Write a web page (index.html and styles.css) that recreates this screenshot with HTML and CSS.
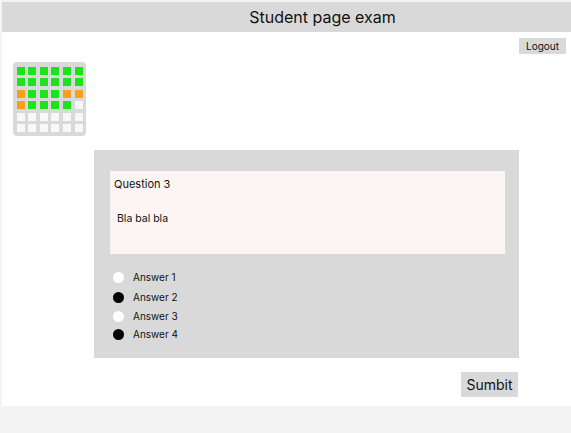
FILE: index.html
```html
<!DOCTYPE html>
<html>
<head>
<meta charset="utf-8">
<link rel="stylesheet" href="styles.css">
</head>
<body>
<div class="frame">
  <header class="header">Student page exam</header>
  <div class="toolbar"><button class="logout">Logout</button></div>
  <div class="grid">
    <span class="c g"></span><span class="c g"></span><span class="c g"></span><span class="c g"></span><span class="c g"></span><span class="c g"></span>
    <span class="c g"></span><span class="c g"></span><span class="c g"></span><span class="c g"></span><span class="c g"></span><span class="c g"></span>
    <span class="c o"></span><span class="c g"></span><span class="c g"></span><span class="c g"></span><span class="c o"></span><span class="c o"></span>
    <span class="c o"></span><span class="c g"></span><span class="c g"></span><span class="c g"></span><span class="c g"></span><span class="c w"></span>
    <span class="c w"></span><span class="c w"></span><span class="c w"></span><span class="c w"></span><span class="c w"></span><span class="c w"></span>
    <span class="c w"></span><span class="c w"></span><span class="c w"></span><span class="c w"></span><span class="c w"></span><span class="c w"></span>
  </div>
  <section class="card">
    <div class="question">
      <div class="qtitle">Question 3</div>
      <div class="qtext">Bla bal bla</div>
    </div>
    <ul class="answers">
      <li class="a1"><span class="dot white"></span>Answer 1</li>
      <li class="a2"><span class="dot black"></span>Answer 2</li>
      <li class="a3"><span class="dot white"></span>Answer 3</li>
      <li class="a4"><span class="dot black"></span>Answer 4</li>
    </ul>
  </section>
  <div class="actions"><button class="submit">Sumbit</button></div>
</div>
</body>
</html>
```
FILE: styles.css
```css
html, body { margin: 0; padding: 0; }
body {
  background: #f4f4f4;
  font-family: Inter, "Noto Sans", sans-serif;
  color: #111;
}
.frame {
  margin: 2px 0 0 2px;
  background: #fff;
  height: 404px;
  display: flex;
  flex-direction: column;
}
.header {
  height: 30px;
  background: #d9d9d9;
  display: flex;
  align-items: center;
  justify-content: center;
  font-size: 16px;
  padding-left: 72px;
  box-sizing: border-box;
}
.toolbar {
  display: flex;
  justify-content: flex-end;
  padding: 6px 5px 0 0;
}
.logout {
  border: none;
  background: #d9d9d9;
  font-family: inherit;
  font-size: 10px;
  color: #111;
  width: 47px;
  height: 16px;
  padding: 0;
}
.grid {
  margin: 8px 0 0 11px;
  width: 73px;
  height: 74px;
  box-sizing: border-box;
  background: #d9d9d9;
  border-radius: 4px;
  padding: 4.5px 0 0 3.5px;
  display: grid;
  grid-template-columns: repeat(6, 8px);
  grid-auto-rows: 8px;
  column-gap: 3.67px;
  row-gap: 3.5px;
}
.c { display: block; width: 8px; height: 8px; }
.g { background: #1de31d; }
.o { background: #f7a01e; }
.w { background: #f9f8f8; }
.card {
  margin: 14px 0 0 92px;
  width: 425px;
  height: 208px;
  box-sizing: border-box;
  background: #d9d9d9;
  padding: 21px 14px 0 16px;
}
.question {
  background: #fdf5f3;
  height: 83px;
  padding: 7px 0 0 4px;
  box-sizing: border-box;
  font-size: 11px;
}
.qtitle { line-height: 13px; }
.qtext { margin: 21px 0 0 3px; font-size: 10.5px; }
.answers {
  list-style: none;
  margin: 17px 0 0 3px;
  padding: 0;
  font-size: 10px;
}
.answers li {
  display: flex;
  align-items: center;
  height: 12px;
}
.a2 { margin-top: 8px; }
.a3 { margin-top: 7px; }
.a4 { margin-top: 6px; }
.dot {
  width: 11px;
  height: 11px;
  border-radius: 50%;
  margin-right: 9px;
}
.dot.white { background: #fff; }
.dot.black { background: #000; }
.actions {
  display: flex;
  justify-content: flex-start;
  padding: 14px 0 0 459px;
}
.submit {
  border: none;
  background: #d9d9d9;
  font-family: inherit;
  font-size: 14px;
  color: #111;
  width: 57px;
  height: 25px;
  padding: 0;
}
```
